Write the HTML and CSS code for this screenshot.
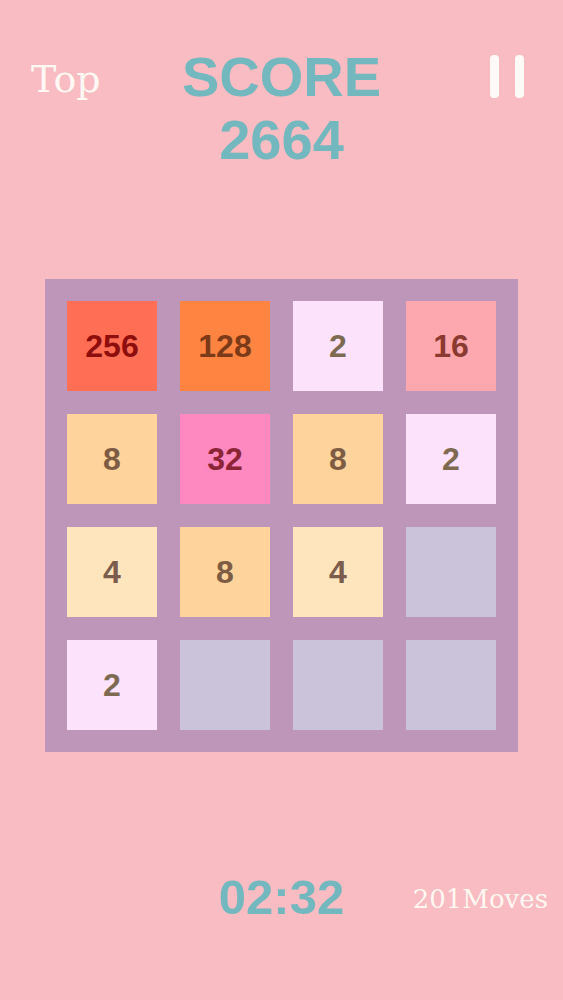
FILE: index.html
```html
<!DOCTYPE html>
<html>
<head>
<meta charset="utf-8">
<link rel="stylesheet" href="styles.css">
</head>
<body>
<div class="screen">
  <header class="header">
    <div class="top">Top</div>
    <div class="score">
      <div class="score-label">SCORE</div>
      <div class="score-value">2664</div>
    </div>
    <div class="pause"><span class="bar"></span><span class="bar"></span></div>
  </header>
  <div class="board">
    <div class="tile t256">256</div>
    <div class="tile t128">128</div>
    <div class="tile t2">2</div>
    <div class="tile t16">16</div>
    <div class="tile t8">8</div>
    <div class="tile t32">32</div>
    <div class="tile t8">8</div>
    <div class="tile t2">2</div>
    <div class="tile t4">4</div>
    <div class="tile t8">8</div>
    <div class="tile t4">4</div>
    <div class="tile empty"></div>
    <div class="tile t2">2</div>
    <div class="tile empty"></div>
    <div class="tile empty"></div>
    <div class="tile empty"></div>
  </div>
  <footer class="footer">
    <div></div>
    <div class="timer">02:32</div>
    <div class="moves">201Moves</div>
  </footer>
</div>
</body>
</html>
```
FILE: styles.css
```css
html, body {
  margin: 0;
  padding: 0;
}
body {
  background: #f9bcc2;
  width: 563px;
  height: 1000px;
  overflow: hidden;
}
.screen {
  display: flex;
  flex-direction: column;
  align-items: center;
  padding-top: 45px;
}
.header {
  width: 563px;
  display: grid;
  grid-template-columns: 1fr auto 1fr;
  align-items: start;
}
.top {
  font-family: "DejaVu Serif", serif;
  font-size: 38px;
  color: #fff8f4;
  padding-left: 31px;
  line-height: 1;
  padding-top: 15px;
}
.score {
  font-family: "Liberation Sans", Arial, sans-serif;
  font-weight: bold;
  font-size: 56px;
  line-height: 63px;
  color: #74b8bf;
  text-align: center;
}
.pause {
  display: flex;
  justify-content: flex-end;
  gap: 16px;
  padding-right: 39px;
  padding-top: 10px;
}
.bar {
  width: 9px;
  height: 43px;
  background: #fffaf8;
  border-radius: 4px;
}
.board {
  margin-top: 108px;
  width: 473px;
  height: 473px;
  box-sizing: border-box;
  padding: 22px;
  background: #bd96b9;
  display: grid;
  grid-template-columns: repeat(4, 90px);
  grid-template-rows: repeat(4, 90px);
  column-gap: 23px;
  row-gap: 23px;
}
.tile {
  display: flex;
  align-items: center;
  justify-content: center;
  font-family: "Liberation Sans", Arial, sans-serif;
  font-weight: bold;
  font-size: 32px;
  color: #7d5c48;
}
.empty { background: #cbc3da; }
.t2 { background: #fde2fb; color: #7e6a50; }
.t4 { background: #fee5bd; color: #7c5c4c; }
.t8 { background: #fed39c; color: #7e5c43; }
.t16 { background: #fda7ae; color: #8a3a30; }
.t32 { background: #fe89c1; color: #8c2436; }
.t128 { background: #ff8442; color: #7c3a18; }
.t256 { background: #ff6e55; color: #8e0d0d; }
.footer {
  width: 563px;
  margin-top: 120px;
  display: grid;
  grid-template-columns: 1fr auto 1fr;
  align-items: center;
}
.timer {
  font-family: "Liberation Sans", Arial, sans-serif;
  font-weight: bold;
  font-size: 49px;
  line-height: 50px;
  color: #74b8bf;
}
.moves {
  font-family: "DejaVu Serif", serif;
  font-size: 26px;
  color: #fff8f2;
  text-align: right;
  padding-right: 15px;
  padding-top: 4px;
}
```
